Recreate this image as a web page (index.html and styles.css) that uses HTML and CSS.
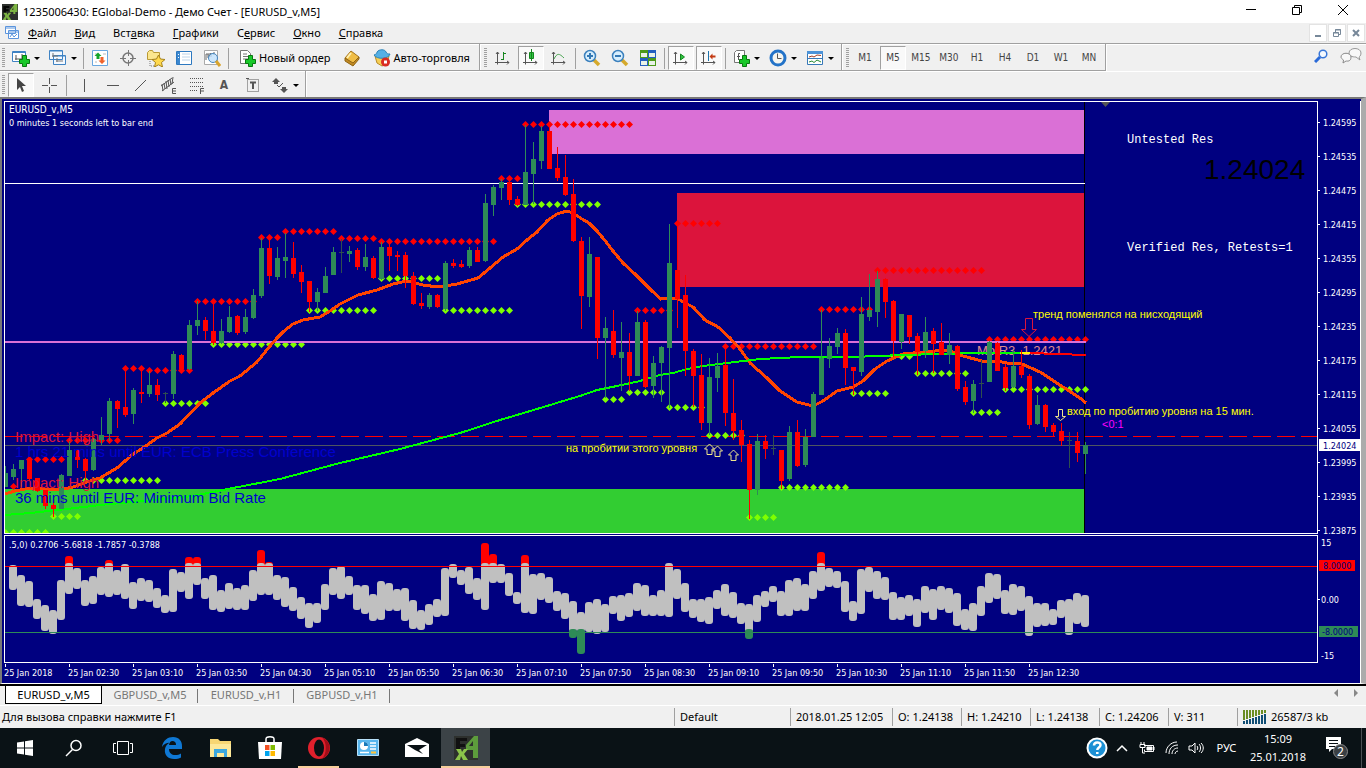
FILE: index.html
```html
<!DOCTYPE html>
<html lang="ru">
<head>
    <meta charset="UTF-8">
    <meta name="viewport" content="width=device-width, initial-scale=1.0">
    <title>1235006430: EGlobal-Demo - Демо Счет - [EURUSD_v,M5]</title>
    <link rel="stylesheet" href="styles.css">
</head>
<body>
    <header class="titlebar">
        <svg class="logo" width="16" height="16" viewBox="0 0 24 24"><rect width="24" height="24" fill="#2d302d"/><path d="M2 3h9v3H6v2h4v3H6v3H2z" fill="#050505"/><path d="M19 0h4v12h-3v3h-3v-3h-5V9zM17 5l-2 4h2z" fill="#7cb342"/><path d="M2 13h5l1 3 2-3h4l-4 5 4 6H9l-2-4-1 4H1l4-6z" fill="#7cb342"/></svg>
        <h1>1235006430: EGlobal-Demo - Демо Счет - [EURUSD_v,M5]</h1>
        <button class="win" aria-label="Свернуть"><svg width="12" height="12"><path d="M1 5.5h10" stroke="#000"/></svg></button>
        <button class="win" aria-label="Восстановить"><svg width="12" height="12"><path d="M1.500 3.500h7v7h-7zM3.500 3.500v-2h7v7h-2" stroke="#000" fill="none"/></svg></button>
        <button class="win" aria-label="Закрыть"><svg width="12" height="12"><path d="M1 1l10 10M11 1L1 11" stroke="#000"/></svg></button>
    </header>

    <nav class="menubar">
        <svg class="doc" width="14" height="14"><path d="M.5.5h10v7h-10zM3.500 4.500h10v8h-10z" fill="#fff" stroke="#5b94dc"/><path d="M.5 2h10M4 6h10" stroke="#5b94dc"/><path d="M5 11l2-3 2 3 3-3" stroke="#5b94dc" fill="none"/></svg>
        <button><u>Ф</u>айл</button>
        <button><u>В</u>ид</button>
        <button>Вст<u>а</u>вка</button>
        <button><u>Г</u>рафики</button>
        <button>С<u>е</u>рвис</button>
        <button><u>О</u>кно</button>
        <button><u>С</u>правка</button>
        <span class="grow"></span>
        <button class="mdi" aria-label="Свернуть окно"><svg width="10" height="10"><path d="M2 8h6" stroke="#778899" stroke-width="2"/></svg></button>
        <button class="mdi" aria-label="Восстановить окно"><svg width="10" height="10"><path d="M1.500 4.500h5v4h-5zM3.500 4V1.500h5v5H7M3 2h6M1 5h6" stroke="#778899" fill="none"/></svg></button>
        <button class="mdi" aria-label="Закрыть окно"><svg width="10" height="10"><path d="M2 2l6 6M8 2L2 8" stroke="#778899" stroke-width="2"/></svg></button>
    </nav>

    <div class="toolbar">
        <div class="group">
            <i class="grip"></i>
            <button class="drop" aria-label="Новый график"><svg width="18" height="18"><path d="M.5 2.500h13v10h-13z" fill="#fff" stroke="#3f83c4"/><path d="M1 3h12" stroke="#3f83c4" stroke-width="2"/><path d="M3 10h8M4 6v5M10 5v6" stroke="#555"/><path d="M10.500 6.500h4v4h3v4h-3v3h-4v-3h-3v-4h3z" fill="#18c829" stroke="#08760f"/></svg></button>
            <button class="drop" aria-label="Профили"><svg width="18" height="18"><path d="M.5 1.500h13v9h-13zM4.500 6.500h12v9h-12z" fill="#f4f9ff" stroke="#3f83c4"/><path d="M1 2h12M5 7h11" stroke="#3f83c4"/><path d="M3 7h6M4 4v4M7 12h7M8 9v4" stroke="#777" fill="none"/></svg></button>
            <i class="sep"></i>
            <button aria-label="Обзор рынка"><svg width="18" height="18"><path d="M1.500 1.500h15v15h-15z" fill="#fff" stroke="#69a7e0"/><path d="M4 5h2M12 5h3M4 13h2" stroke="#bbb"/><path d="M7 3.500l3.500 3.500H8.500v3h-3V7h-2z" fill="#13a52a"/><path d="M11 15l3.500-3.500H12.500V8h-3v3.500h-2z" fill="#f0632b"/></svg></button>
            <button aria-label="Окно данных"><svg width="18" height="18" fill="none" stroke="#777"><circle cx="9" cy="9" r="5" stroke-width="1.500"/><path d="M9.500 1v6M9.500 11v6M1 9.500h6M11 9.500h6"/></svg></button>
            <button aria-label="Навигатор"><svg width="20" height="18"><path d="M1.500 3.500l2-2h3l1 2h6v7h-12z" fill="#fbe68e" stroke="#b99a35"/><path d="M4 12v5h4" stroke="#777" stroke-dasharray="1 1" fill="none"/><path d="M12.500 6l2 4 4.500.5-3.500 3 1 4.500-4-2.200-4 2.200 1-4.500-3.500-3 4.500-.5z" fill="#ffd94d" stroke="#a5811b"/></svg></button>
            <button aria-label="Терминал"><svg width="18" height="18"><path d="M1.500 2.500h15v13h-15z" fill="#fff" stroke="#2c78c0"/><path d="M2 3h3v12H2z" fill="#3b87cf"/><path d="M7 5h8M7 8h8M7 11h8" stroke="#bcd4ea"/><path d="M3 5.500h1M3 8.500h1" stroke="#fff"/></svg></button>
            <button aria-label="Тестер"><svg width="18" height="18"><path d="M1.500 1.500h13v14h-13z" fill="#fff" stroke="#aaa"/><path d="M3 11V5h2v4M6 4v4l2-4v4M11 3v3" stroke="#666" fill="none"/><circle cx="10" cy="9" r="4.500" fill="#bfe0fbcc" stroke="#4787c0"/><path d="M13 12l4 5" stroke="#d8a32c" stroke-width="3"/></svg></button>
            <i class="sep"></i>
            <button class="wide"><svg width="18" height="18"><path d="M2.500 1.500h7l3 3v10h-10z" fill="#fff" stroke="#777"/><path d="M5 5h4M5 7.500h6M5 10h5" stroke="#777"/><path d="M10.500 6.500h4v4h3v4h-3v3h-4v-3h-3v-4h3z" fill="#18c829" stroke="#08760f"/></svg>Новый ордер</button>
            <button aria-label="MetaEditor"><svg width="18" height="18"><path d="M2 9l6-7 8 6-6 8z" fill="#f0bd45" stroke="#a4731a"/><path d="M2 9v3l8 5 6-7V8l-6 6z" fill="#c18a24" stroke="#8f6414"/><path d="M4 9l4-5" stroke="#fff0b0" stroke-width="2"/></svg></button>
            <button class="wide"><svg width="18" height="18"><path d="M2 7h14l-2 8-5 2-5-3z" fill="#f6cf56" stroke="#b88b28"/><path d="M1 6c2-1 3-1 3-3 2-3 8-3 9 0 1 2 2 2 4 2-1 5-13 6-16 1z" fill="#55b0e5" stroke="#2c83b8"/><circle cx="12.500" cy="13" r="4.500" fill="#d92c22"/><rect x="11" y="11.500" width="3" height="3" fill="#fff"/></svg>Авто-торговля</button>
        </div>
        <div class="group">
            <i class="grip"></i>
            <button aria-label="Бары"><svg width="18" height="18" fill="none" stroke="#555"><path d="M3.500 3v12.500M1 13.500h14M2 5l1.500-2L5 5M13 12l2 1.500-2 2"/><path d="M9.500 11V3M7 10.500h2.500M9.500 4.500H12" stroke="#15861f"/></svg></button>
            <button class="pressed" aria-label="Свечи"><svg width="18" height="18" fill="none" stroke="#555"><path d="M3.500 3v12.500M1 13.500h14M2 5l1.500-2L5 5M13 12l2 1.500-2 2"/><path d="M9.500 0v12M7.500 3.500h4v6h-4z" stroke="#15861f" fill="#2fc440"/></svg></button>
            <button aria-label="Линия"><svg width="18" height="18" fill="none" stroke="#555"><path d="M3.500 3v12.500M1 13.500h14M2 5l1.500-2L5 5M13 12l2 1.500-2 2"/><path d="M4 10c3-6 5-6 10-1" stroke="#4aa552"/></svg></button>
            <i class="sep"></i>
            <button aria-label="Увеличить"><svg width="18" height="18"><path d="M11 11l5 5" stroke="#d5a92c" stroke-width="3.500"/><circle cx="7" cy="7" r="5.500" fill="#d7eefd" stroke="#3b80bd" stroke-width="1.500"/><path d="M4 7h6M7 4v6" stroke="#3479b5" stroke-width="2"/></svg></button>
            <button aria-label="Уменьшить"><svg width="18" height="18"><path d="M11 11l5 5" stroke="#d5a92c" stroke-width="3.500"/><circle cx="7" cy="7" r="5.500" fill="#d7eefd" stroke="#3b80bd" stroke-width="1.500"/><path d="M4 7h6" stroke="#3479b5" stroke-width="2"/></svg></button>
            <button aria-label="Расположить окна"><svg width="18" height="18"><path d="M1 1h8v8H1zM9 9h8v8H9z" fill="#4b9a19"/><path d="M9 1h8v8H9zM1 9h8v8H1z" fill="#235fc0"/><path d="M2 4h6v4H2zM10 4h6v4h-6zM2 12h6v4H2zM10 12h6v4h-6z" fill="#e8f2e8"/></svg></button>
            <i class="sep"></i>
            <button class="pressed" aria-label="Автопрокрутка"><svg width="18" height="18" fill="none" stroke="#555"><path d="M3.500 3v12.500M1 13.500h14M2 5l1.500-2L5 5M13 12l2 1.500-2 2"/><path d="M8.500 5v6l4-3z" stroke="#15861f" fill="#2fc440"/></svg></button>
            <button class="pressed" aria-label="Сдвиг графика"><svg width="18" height="18" fill="none" stroke="#555"><path d="M3.500 3v12.500M1 13.500h14M2 5l1.500-2L5 5M13 12l2 1.500-2 2"/><path d="M8.500 2v10" stroke="#1d74ad"/><path d="M9.500 7.500l3-3v2h3v2h-3v2z" fill="#c33a12" stroke="none"/></svg></button>
            <i class="sep"></i>
            <button class="drop" aria-label="Индикаторы"><svg width="18" height="18"><path d="M4.500 1.500h8v12h-10v-10z" fill="#fff" stroke="#777"/><path d="M8 4.500H6.500V11M5 7.500h3" stroke="#555" fill="none"/><path d="M10.500 6.500h4v4h3v4h-3v3h-4v-3h-3v-4h3z" fill="#18c829" stroke="#08760f"/></svg></button>
            <button class="drop" aria-label="Периоды"><svg width="18" height="18"><circle cx="9" cy="9" r="7" fill="#f5f5f0" stroke="#2373c8" stroke-width="3"/><path d="M8.500 4.500v5h4" stroke="#555" fill="none"/></svg></button>
            <button class="drop" aria-label="Шаблоны"><svg width="18" height="18"><path d="M1.500 2.500h15v13h-15z" fill="#fff" stroke="#3778b8"/><path d="M1 3.500h16" stroke="#4c93d8" stroke-width="3"/><path d="M2 9.500h14" stroke="#3778b8"/><path d="M3 8l3-1 2 1 3-2 4 .5" stroke="#a23c22" fill="none"/><path d="M3 13l3-1 2 1.500 3-2.500 4 2" stroke="#278b35" fill="none"/></svg></button>
        </div>
        <div class="group periods">
            <i class="grip"></i>
            <button>M1</button>
            <button class="pressed">M5</button>
            <button>M15</button>
            <button>M30</button>
            <button>H1</button>
            <button>H4</button>
            <button>D1</button>
            <button>W1</button>
            <button>MN</button>
        </div>
        <span class="grow"></span>
        <button class="side" aria-label="Поиск"><svg width="14" height="14"><path d="M6 8l-5 5" stroke="#2a6ad8" stroke-width="3"/><circle cx="9" cy="5" r="3.800" fill="#f4f9ff" stroke="#3876d8" stroke-width="1.500"/></svg></button>
        <button class="side" aria-label="Чат"><svg width="22" height="16"><path d="M9 5c0-6 12-6 12 0 0 3-2 4-2 4l1 3-4-3c-4 0-7-1-7-4z" fill="#f8f8f8" stroke="#999"/><path d="M1 9c0-5 10-5 10 0s-4 4-5 4l-3 2 .500-3C2 11 1 10 1 9z" fill="#f8f8f8" stroke="#888"/></svg></button>
    </div>

    <div class="toolbar drawing">
        <div class="group">
            <i class="grip"></i>
            <button class="pressed" aria-label="Курсор"><svg width="18" height="18"><path d="M5 2v12l3-3 2 5 2-1-2-5h4z" fill="#444"/></svg></button>
            <button aria-label="Перекрестие"><svg width="18" height="18" stroke="#555"><path d="M9.500 2v6M9.500 11v6M2 9.500h6M11 9.500h6"/></svg></button>
            <i class="sep"></i>
            <button aria-label="Вертикальная линия"><svg width="18" height="18" stroke="#555"><path d="M9.500 3v13"/></svg></button>
            <button aria-label="Горизонтальная линия"><svg width="18" height="18" stroke="#555"><path d="M4 9.500h12"/></svg></button>
            <button aria-label="Трендовая линия"><svg width="18" height="18" stroke="#555"><path d="M4 15L15 4"/></svg></button>
            <button aria-label="Канал"><svg width="18" height="18" stroke="#555" fill="none"><path d="M2 10L13 2M3 15L15 6M3 8l1 7M7 5l1 8M11 3l1 6M5 7l1 6M9 4l1 7M14 1l-1 7"/><path d="M17 12.500h-3.500v5H17M14 15h3"/></svg></button>
            <button aria-label="Фибоначчи"><svg width="18" height="18" stroke="#555" fill="none"><path d="M3 2.500h13M3 6.500h13M3 10.500h13M3 14.500h8" stroke-dasharray="1 1"/><path d="M17 12.500h-3.500V18M14 15h3"/></svg></button>
            <button class="glyph">A</button>
            <button aria-label="Метка"><svg width="18" height="18" stroke="#555" fill="none"><path d="M4.500 3.500h11v12h-11z" stroke-dasharray="1 1"/><path d="M7 6.500h6M10 7v6" stroke-width="2"/><path d="M3 2.500h3"/></svg></button>
            <button class="drop" aria-label="Стрелки"><svg width="18" height="18" fill="#555"><path d="M1 6l4-4 4 4H7v2H3V6zM9 13h2v-2h4v2h2l-4 4z"/><path d="M6 9l2 2 4-4" fill="none" stroke="#555"/></svg></button>
        </div>
    </div>

    <main class="chart">
        <svg class="panel" id="price"></svg>
        <svg class="panel" id="osc"></svg>
        <svg class="times" id="times"></svg>
        <svg class="scale" id="scale"></svg>
    </main>

    <nav class="tabs">
        <button class="active">EURUSD_v,M5</button>
        <button>GBPUSD_v,M5</button>
        <button>EURUSD_v,H1</button>
        <button>GBPUSD_v,H1</button>
        <span class="grow"></span>
        <button class="scroll" aria-label="Назад"><svg width="6" height="8"><path d="M5 0v8L1 4z" fill="#888"/></svg></button>
        <button class="scroll" aria-label="Вперед"><svg width="6" height="8"><path d="M1 0v8l4-4z" fill="#888"/></svg></button>
    </nav>

    <footer class="status">
        <span class="hint">Для вызова справки нажмите F1</span>
        <span class="profile">Default</span>
        <span class="date">2018.01.25 12:05</span>
        <span>O: 1.24138</span>
        <span>H: 1.24210</span>
        <span>L: 1.24138</span>
        <span>C: 1.24206</span>
        <span>V: 311</span>
        <span class="traffic"><svg width="24" height="14"><path d="M1 0v10M4 0v9M7 0v8M10 0v7M13 0v6M16 0v5M19 0v4M22 0v3" stroke="#6b8e23" stroke-width="2"/><path d="M1 11v3M4 10v4M7 9v5M10 8v6M13 7v7M16 6v8M19 5v9M22 4v10" stroke="#104e75" stroke-width="2"/></svg>26587/3 kb</span>
    </footer>

    <div class="taskbar">
        <button aria-label="Пуск"><svg width="16" height="16" fill="#fff"><path d="M0 2.500l7-1v6H0zM8 1.300L16 0v7.500H8zM0 8.500h7v6l-7-1zM8 8.500h8V16l-8-1.300z"/></svg></button>
        <button aria-label="Поиск Windows"><svg width="18" height="18" fill="none" stroke="#fff" stroke-width="1.500"><circle cx="11" cy="6.500" r="5"/><path d="M7.500 10.500L1 17"/></svg></button>
        <button aria-label="Представление задач"><svg width="20" height="16" fill="none" stroke="#fff"><path d="M4.500 1.500h11v13h-11zM3 3.500H.5v9H3M17 3.500h2.500v9H17"/></svg></button>
        <button aria-label="Edge"><svg width="22" height="22" fill="#0f78d4"><path d="M1 10C2 3 7 0 12 0c6 0 9 4 9 9v3H8c0 4 3 6 6 6 3 0 4-.5 6-1.500v4c-2 1-4 1.500-7 1.500-6 0-10-4-9-10 .5-3 2-5 5-6.500C5 6 3 7 1 10zm7-2h7c0-3-1.500-4-3.500-4S8.500 5.500 8 8z"/></svg></button>
        <button aria-label="Проводник"><svg width="22" height="20"><path d="M0 1h8l2 2h11v16H0z" fill="#f7d673"/><path d="M0 6h21v13H0z" fill="#fde899"/><path d="M4 11h13v8h-3v-4H7v4H4z" fill="#3ba7df"/></svg></button>
        <button aria-label="Магазин"><svg width="24" height="24"><path d="M8 6V3c0-3 8-3 8 0v3" fill="none" stroke="#fff" stroke-width="1.500"/><path d="M0 6h24l-1 17H1z" fill="#fff"/><path d="M7 9h4.500v5H7z" fill="#f25022"/><path d="M12.500 9H17v5h-4.500z" fill="#7fba00"/><path d="M7 15h4.500v5H7z" fill="#00a4ef"/><path d="M12.500 15H17v5h-4.500z" fill="#ffb900"/></svg></button>
        <button class="running" aria-label="Opera"><svg width="24" height="24"><ellipse cx="12" cy="12" rx="11" ry="11" fill="#e0202c"/><path d="M15 1.500a11 11 0 0 1 0 21c5-4 5-17 0-21z" fill="#a30d18"/><ellipse cx="12" cy="12" rx="5" ry="8.500" fill="#091014"/></svg></button>
        <button aria-label="Панель управления"><svg width="22" height="18"><path d="M.5.5h21v16H.5z" fill="#58b5ec" stroke="#b8e1fa"/><circle cx="7" cy="7" r="4" fill="#fff"/><path d="M7 7V3a4 4 0 0 1 4 4z" fill="#1979b9"/><path d="M13 4h6M13 7h6M13 10h6M3 13.500h9" stroke="#fff" stroke-width="1.500"/><path d="M14 13.500h5" stroke="#ffc43a" stroke-width="2"/></svg></button>
        <button aria-label="Почта"><svg width="24" height="20"><path d="M0 6l12-6 12 6v13H0z" fill="#fff"/><path d="M2 7h20l-8 5 4 4-8-4z" fill="#091014"/></svg></button>
        <button class="current" aria-label="EGlobal MT4"><svg width="24" height="24"><rect width="24" height="24" fill="#2d302d"/><path d="M2 2h11v3H6v3h5v3H6v2H2z" fill="#111"/><path d="M20 0h4v22h-5v-8h-7V9zM19 5l-4 5h4z" fill="#5d9c3c"/><path d="M2 13h5l1 3 2-3h4l-4 5 4 6H9l-2-4-1 4H1l4-6z" fill="#8bc34a"/></svg></button>
        <span class="grow"></span>
        <button class="tray" aria-label="Справка"><svg width="22" height="22"><circle cx="11" cy="11" r="9.500" fill="#1c90d4" stroke="#fff" stroke-width="2"/><path d="M8 8.500c0-4 6.500-4 6.500-.5 0 2.500-3.200 2.500-3.200 5M11.300 15v2" fill="none" stroke="#fff" stroke-width="2.500"/></svg></button>
        <button class="tray" aria-label="Скрытые значки"><svg width="12" height="8" fill="none" stroke="#fff" stroke-width="1.500"><path d="M1 7l5-5 5 5"/></svg></button>
        <button class="tray" aria-label="Батарея"><svg width="16" height="14" fill="none" stroke="#fff"><path d="M5 4.500h9.500v6h-9v-2M15 6v3M1 3.500h5v3H1zM2 1v2M5 1v2M3.500 7v5H6"/><path d="M8 6h5v3H8z" fill="#fff"/></svg></button>
        <button class="tray" aria-label="Сеть"><svg width="14" height="14" fill="none" stroke="#fff"><path d="M1 12C1 6 6 1 12 1M4 13c0-5 3-9 9-9M7 13c0-3 2-6 6-6M10 13c0-1 1-3 3-3" /></svg></button>
        <button class="tray" aria-label="Громкость"><svg width="18" height="14" fill="none" stroke="#fff"><path d="M1 5h3l3-3v10L4 9H1zM9 5c1 1 1 3 0 4M11 3c2 2 2 6 0 8M13 2c3 3 3 7 0 10"/></svg></button>
        <button class="lang">РУС</button>
        <div class="clock"><time>15:09</time><time>25.01.2018</time></div>
        <button class="notes" aria-label="Уведомления"><svg width="24" height="24"><path d="M1 1h15v12h-9l-3 3v-3H1z" fill="#fff"/><path d="M4 4.500h9M4 7.500h9M4 10.500h6" stroke="#091014"/><circle cx="15.500" cy="15.500" r="7" fill="#3a3f43" stroke="#888"/><text x="12" y="20" class="badge">2</text></svg></button>
        <i class="desktop"></i>
    </div>
    <script src="chart.js"></script>
</body>
</html>
```
FILE: styles.css
```css
* {
    margin: 0;
    padding: 0;
    box-sizing: border-box;
}

body {
    display: flex;
    flex-direction: column;
    min-height: 100vh;
    background: #f0f0f0;
    color: #000;
    font: 12px/16px "Noto Sans", "Open Sans", sans-serif;
    overflow: hidden;
}

button {
    display: flex;
    align-items: center;
    justify-content: center;
    border: none;
    background: none;
    color: inherit;
    font: inherit;
    white-space: nowrap;
}

svg {
    display: block;
    flex: none;
}

.grow {
    flex: 1;
}

/* title and menu */
.titlebar {
    display: flex;
    align-items: center;
    height: 23px;
    padding-left: 2px;
    background: #fff;
}

.titlebar h1 {
    flex: 1;
    margin-left: 5px;
    font-size: 11px;
    font-weight: normal;
}

.win {
    width: 46px;
    height: 20px;
    margin-bottom: 3px;
}

.menubar {
    display: flex;
    align-items: center;
    height: 20px;
    font-size: 11px;
}

.menubar .doc {
    margin: 0 0 0 5px;
}

.menubar button {
    padding: 0 9px;
}

.menubar .mdi {
    width: 18px;
    height: 18px;
    margin-right: 1px;
    padding: 0;
    background: #fff;
    border: 1px solid #e3e3e3;
}

/* toolbars */
.toolbar {
    display: flex;
    height: 28px;
    border-top: 1px solid #a0a0a0;
    box-shadow: inset 0 1px #fff, inset 0 -1px #a0a0a0;
}

.toolbar.drawing {
    height: 26px;
    border-top: none;
    box-shadow: inset 0 1px #fff;
}

.toolbar:not(.drawing) {
    box-shadow: inset 0 1px #fff;
}

.group {
    display: flex;
    align-items: center;
    padding: 2px 2px 0;
    border-right: 1px solid #a0a0a0;
    border-bottom: 1px solid #a0a0a0;
    box-shadow: 1px 0 #fff;
}

.group + .group {
    padding-left: 4px;
}

.drawing .group {
    border-bottom: none;
}

.grip {
    width: 3px;
    height: 20px;
    margin-right: 2px;
    background: repeating-linear-gradient(#a0a0a0 0 1px, #f0f0f0 1px 2px);
}

.sep {
    width: 1px;
    height: 21px;
    margin: 0 2px;
    background: #a0a0a0;
}

.drawing .sep {
    margin: 0 3px;
}

.toolbar button {
    width: 28px;
    height: 24px;
}

.toolbar .drop {
    width: 37px;
    gap: 4px;
}

.drop::after {
    content: "";
    border: 3px solid transparent;
    border-top-color: #000;
    border-bottom: none;
}

.toolbar .wide {
    width: auto;
    padding: 0 7px;
    gap: 3px;
    font-size: 11px;
}

.toolbar .pressed {
    width: 26px;
    margin: 0 1px;
    background: #f9f9f9;
    border: 1px solid #fff;
    border-top-color: #a0a0a0;
    border-left-color: #a0a0a0;
}

.periods {
    color: #444;
    font: 10px/14px "DejaVu Sans Condensed", sans-serif;
}

.toolbar .glyph {
    color: #555;
    font: bold 12px/14px "DejaVu Sans Condensed", sans-serif;
}

.toolbar .side {
    width: 30px;
}

/* chart window */
.chart {
    display: grid;
    grid-template-columns: 1fr 43px;
    grid-template-rows: 433px 128px auto;
    row-gap: 1px;
    flex: 1;
    padding: 2px 0 0 2px;
    background: #000080;
    border-style: solid;
    border-width: 2px 5px 1px 2px;
    border-color: #787878 #ababab #fff #787878;
    font: 9px/12px "DejaVu Sans Condensed", sans-serif;
    fill: #fff;
}

.panel {
    width: 100%;
    height: 100%;
    border: 1px solid #fff;
    overflow: hidden;
}

.times {
    width: 100%;
    height: 19px;
}

.scale {
    grid-column: 2;
    grid-row: 1 / 4;
    width: 43px;
    height: 100%;
    border-right: 1px solid #fff;
}

.note {
    fill: #ffff00;
    font: 11px "Liberation Sans", sans-serif;
}

.chart .symbol {
    font-size: 10px;
}

.news {
    font: 15px "Liberation Sans", sans-serif;
}

.pivot {
    fill: #e08c8c;
    font: 13px "Liberation Sans", sans-serif;
}

.quote {
    fill: #000;
    font: 28px "Liberation Sans", sans-serif;
}

.zone {
    font: 12px "Liberation Mono", monospace;
}

.risk {
    fill: #ff00ff;
    font: 11px "Liberation Sans", sans-serif;
}

/* tabs and status */
.tabs {
    display: flex;
    align-items: flex-start;
    height: 21px;
    padding-left: 5px;
    border-top: 2px solid #000;
    color: #777;
    font-size: 11px;
}

.tabs button {
    position: relative;
    width: 96px;
    height: 18px;
}

.tabs button:not(.active):not(.scroll)::after {
    content: "";
    position: absolute;
    right: 0;
    top: 3px;
    height: 14px;
    border-right: 1px solid #777;
}

.tabs .active {
    width: 97px;
    background: #fff;
    border: 1px solid #000;
    border-top: none;
    color: #000;
}

.tabs .scroll {
    width: 20px;
    height: 14px;
}

.status {
    display: flex;
    align-items: center;
    height: 23px;
    border-top: 1px solid #fff;
    font-size: 11px;
    line-height: 18px;
}

.status span {
    flex: none;
    width: 69px;
    height: 18px;
    padding-left: 5px;
    border-left: 1px solid #a0a0a0;
    white-space: nowrap;
}

.status .hint {
    flex: 1;
    padding-left: 2px;
    border-left: none;
}

.status .profile {
    width: 116px;
}

.status .date {
    width: 102px;
}

.status .traffic {
    display: flex;
    align-items: center;
    gap: 4px;
    width: 129px;
}

/* taskbar */
.taskbar {
    display: flex;
    align-items: center;
    height: 40px;
    background: #0a1216;
    color: #fff;
    font-size: 11px;
}

.taskbar button {
    width: 49px;
    height: 40px;
    border-bottom: 2px solid transparent;
    border-top: 2px solid transparent;
}

.taskbar .running {
    width: 41px;
    margin: 0 4px;
    border-bottom-color: #f7cf9c;
}

.taskbar .current {
    background: #3c4347;
    border-bottom-color: #f7cf9c;
}

.taskbar .tray {
    width: 25px;
}

.taskbar .lang {
    width: 35px;
}

.clock {
    display: flex;
    flex-direction: column;
    align-items: center;
    width: 68px;
    line-height: 18px;
}

.badge {
    fill: #fff;
    font: 12px "Noto Sans", sans-serif;
}

.desktop {
    height: 40px;
    width: 5px;
    border-left: 1px solid #4a5054;
}
```
FILE: chart.js
```js
// drawing coordinates: one bar every 8px, y grows down from the top of the window
const UP = "#2e8b57", DOWN = "#ff0000", FLAT = "#2f4f4f";
const barX = k => 5 + 8 * k;

// type, high, body top, body bottom, low
const candles = `
u466,473,487,487 u464,469,477,480 u460,460,469,487 d458,460,479,480 d478,478,491,492 d490,490,506,509 d501,505,509,517 u474,475,509,509
u441,450,476,476 d450,450,460,468 d458,459,471,481 u438,439,470,471 u417,435,440,445 u398,401,434,441 d400,401,409,428 d369,407,415,417
u388,390,414,424 d369,392,394,403 u371,385,394,397 d379,385,395,401 f392,393,394,403 u351,354,394,399 d354,355,369,370 u320,325,369,370
u301,320,326,335 d317,320,331,340 d303,331,343,345 u319,331,343,344 u306,317,332,333 d315,316,333,335 u309,317,332,334 u289,295,318,319
u238,248,296,298 d240,248,276,284 u247,258,277,280 u233,257,261,278 d242,258,274,278 d265,272,282,293 d281,281,302,312 u288,292,302,311
u267,276,293,293 u247,252,275,275 f239,252,253,273 u246,251,254,262 d248,250,267,270 u244,257,267,271 d256,258,278,279 u242,247,279,280
d244,247,256,271 d251,255,257,271 d252,255,276,288 d272,276,304,305 d293,303,306,309 u293,295,307,309 d294,295,307,308 u261,263,309,311
d259,263,266,268 d260,264,267,268 u247,250,266,268 d247,250,262,262 u194,203,261,262 u185,187,205,216 u179,182,188,200 d179,182,200,205
d196,199,205,206 u125,172,205,205 u142,159,174,204 u126,131,161,169 d124,131,169,169 d147,168,178,181 d155,177,195,196 d179,194,241,242
d237,241,296,329 u237,254,297,307 d257,257,338,359 u317,328,338,398 d310,331,355,358 u322,352,358,391 d333,352,376,391 u311,322,376,376
d320,322,387,388 u356,363,386,398 u346,347,363,402 u224,263,348,408 d223,270,299,328 d275,295,351,376 d349,351,376,407 d354,375,423,430
u358,377,423,435 u353,366,378,392 d347,365,413,426 d379,413,431,440 d420,430,445,462 d440,444,490,519 u434,441,490,495 d435,441,449,459
f435,448,449,455 d450,450,481,489 u426,432,479,481 d420,432,466,467 u429,437,465,467 u392,394,437,437 u310,358,395,395 u338,346,359,368
u328,333,347,354 d329,333,368,385 d367,367,371,395 u297,314,372,376 u274,310,317,321 u271,279,312,327 d278,279,302,318 d300,301,341,357
u314,314,342,349 d315,315,337,344 d333,336,352,375 u317,332,351,358 d328,331,344,373 d323,342,355,355 u333,345,355,364 d345,346,389,391
d381,387,402,405 u380,384,401,413 f360,383,384,398 u341,342,382,382 d342,343,371,371 d364,367,388,391 u350,366,387,388 d350,366,375,378
d374,376,425,429 u395,405,424,425 d404,405,427,432 d423,425,432,436 d423,431,441,446 f432,440,441,468 d432,441,453,462 u442,445,454,474`
    .trim().split(/\s+/);

// first x, last x, y
const upperDots = [[13,13,486],[29,61,459],[69,117,440],[125,141,368],[149,189,370],[197,253,301],[261,277,237],
    [285,333,231],[341,373,238],[381,493,241],[501,517,178],[525,629,124],[677,717,223],[637,669,310],[725,813,346],
    [821,869,309],[877,981,270],[989,1085,339]];
const lowerDots = [[5,45,532],[53,77,516],[85,157,480],[165,205,403],[213,301,344],[309,373,310],[381,437,278],
    [445,509,310],[517,597,204],[605,621,399],[629,661,392],[669,701,407],[709,741,435],[749,773,517],[781,845,487],
    [853,885,393],[893,909,356],[917,965,373],[973,997,412],[1005,1085,389]];

const fastMa = "5,494 15,491 30,488 60,490 73,487 90,481 100,478 117,468 133,454 143,448 157,438 167,433 180,424 200,403 213,393 230,381 240,376 257,362 270,346 277,338 283,332 293,324 303,320 320,317 330,311 340,304 358,295 377,290 393,284 407,281 423,285 438,287 457,284 478,278 490,268 503,257 517,249 527,240 537,232 548,220 557,214 567,211 573,213 582,219 589,223 597,231 607,243 613,251 623,263 635,274 652,291 661,299 677,298 683,302 693,307 705,320 718,327 730,338 740,349 750,363 767,378 780,391 797,402 813,406 823,401 837,391 853,387 863,381 875,369 887,361 903,354 923,352 947,350 963,356 982,361 997,361 1007,363 1022,364 1040,372 1063,387 1080,398 1086,403";
const slowMa = "5,515 30,513 67,509 100,505 143,501 193,496 233,488 280,479 340,463 400,449 460,433 500,420 537,409 560,402 580,396 597,390 617,386 640,381 660,375 673,373 687,369 703,366 727,363 760,359 800,357 853,357 903,355 940,354 980,353 1020,353";

// top and bottom of every oscillator bar, from the second candle on
const waves = `565,590 575,606 581,607 599,619 605,631 610,634 580,620 563,594 568,589 580,606 576,604 567,595 563,597 570,595 564,599 582,609 578,601
580,602 588,608 595,613 569,612 572,592 563,599 563,585 578,599 575,610 590,612 583,609 588,610 585,610 570,601 563,595 563,595 575,600 577,607
587,611 597,619 603,628 603,623 584,610 568,595 566,599 576,595 585,610 585,614 594,621 581,620 583,611 589,611 588,621 600,629 610,630 604,625
599,617 568,616 564,578 570,585 567,594 578,600 563,610 563,583 564,583 573,596 592,604 563,613 574,614 573,600 577,603 591,611 593,619 601,632
612,632 602,632 599,634 604,632 596,614 595,621 593,617 583,611 585,616 595,616 590,616 563,617 569,599 583,612 599,618 599,622 597,624 590,609
584,616 592,618 603,624 604,632 595,622 591,607 586,602 591,616 580,616 578,611 584,611 571,599 563,591 568,587 571,588 581,612 601,621 569,614
567,592 571,599 577,600 592,620 597,620 595,616 599,627 586,613 589,620 586,610 588,613 593,626 609,630 603,631 586,616 573,603 574,599 590,614
584,615 586,611 596,636 603,627 603,626 609,625 600,618 599,635 593,624 595,627`.trim().split(/\s+/);
const overbought = {8: 556, 13: 560, 23: 557, 24: 557, 32: 550, 33: 562, 60: 543, 61: 554, 65: 555, 102: 552};
const oversold = {71: 638, 72: 654, 93: 639};

const rect = (x, y, w, h, fill) => `<rect x="${x}" y="${y}" width="${w}" height="${h}" fill="${fill}"/>`;
const label = (x, y, text, cls = "", fill = "") => `<text x="${x}" y="${y}" class="${cls}"${fill && ` fill="${fill}"`}>${text}</text>`;

function dots(rows, color) {
    let out = "";
    rows.forEach(([from, to, y]) => {
        for (let x = from; x <= to; x += 8) {
            out += `<path d="M${x - 3} ${y + 0.5}l3.500 -3.500l3.500 3.500l-3.500 3.500z" fill="${color}"/>`;
        }
    });
    return out;
}

function drawPrice() {
    let out = rect(549, 110, 536, 44, "#da70d6") + rect(677, 193, 408, 94, "#dc143c") + rect(5, 489, 1080, 44, "#32cd32");
    out += rect(1084, 102, 1, 432, "#000") + rect(5, 183, 1080, 1, "#fff") + rect(5, 445, 4000, 1, "#4f5560");
    out += '<path d="M5 436.500H4000" stroke="#ff0000" stroke-dasharray="18 6"/>';
    out += dots(upperDots, "#ff0000") + dots(lowerDots, "#7fff00");
    out += rect(5, 341, 1081, 2, "#da70d6");
    out += label(977, 355, "Mo R3&#160; 1.2421", "pivot");
    out += `<g fill="none" shape-rendering="crispEdges"><polyline points="${fastMa}" stroke="#ff4500" stroke-width="3"/>
        <polyline points="${slowMa}" stroke="#00ff00" stroke-width="2"/>
        <path d="M1020 353h10" stroke="#ffff00" stroke-width="2"/><path d="M1030 353l28 1 28 1" stroke="#ff0000" stroke-width="2"/></g>`;
    candles.forEach((c, k) => {
        const [high, top, bottom, low] = c.slice(1).split(",").map(Number);
        const color = {u: UP, d: DOWN, f: FLAT}[c[0]];
        out += rect(barX(k), high, 1, Math.max(low - high, 1), color) + rect(barX(k) - 2, top, 5, bottom - top, color);
    });
    out += label(15, 442, "Impact: High", "news", "#dc143c") + label(15, 457, "1 hrs 21 mins until EUR: ECB Press Conference", "news", "#0000cd");
    out += label(15, 488, "Impact: High", "news", "#dc143c") + label(15, 503, "36 mins until EUR: Minimum Bid Rate", "news", "#0000cd");
    out += label(9, 113, "EURUSD_v,M5", "symbol") + label(9, 126, "0 minutes 1 seconds left to bar end");
    out += label(1127, 143, "Untested Res", "zone") + label(1127, 251, "Verified Res, Retests=1", "zone");
    out += label(1204, 179, "1.24024", "quote") + label(1102, 428, "&lt;0:1", "risk");
    out += label(1033, 318, "тренд поменялся на нисходящий", "note") + label(1067, 415, "вход по пробитию уровня на 15 мин.", "note");
    out += label(566, 452, "на пробитии этого уровня", "note");
    out += '<path d="M1025.500 318.500h7v11h4l-7.500 7-7.500-7h4z" fill="none" stroke="#dc143c"/>';
    out += '<path d="M1058.500 409.500h4v7h3l-5 4-5-4h3z" fill="none" stroke="#f0e68c"/>';
    [[709, 444], [717, 446], [733, 450]].forEach(([x, y]) => {
        out += `<path d="M${x + 0.5} ${y}l5 5h-2.500v5.500h-5v-5.500h-2.500z" fill="none" stroke="#f0e68c"/>`;
    });
    out += '<path d="M1101 102h9l-4.500 5z" fill="#555"/>';
    document.getElementById("price").innerHTML = `<g transform="translate(-5 -102)">${out}</g>`;
}

function drawOscillator() {
    const pill = (k, top, bottom, fill) => `<rect x="${barX(k) - 4}" y="${top}" width="8" height="${bottom - top}" rx="3" fill="${fill}"/>`;
    let out = "";
    waves.forEach((w, i) => {
        const k = i + 1;
        const [top, bottom] = w.split(",").map(Number);
        if (overbought[k]) out += pill(k, overbought[k], 570, DOWN);
        out += pill(k, top, bottom, "#c0c0c0");
        if (oversold[k]) out += pill(k, 629, oversold[k], UP);
    });
    out += rect(5, 566, 4000, 1, "#ff0000") + rect(5, 632, 4000, 1, UP);
    out += label(9, 548, ".5,0) 0.2706 -5.6818 -1.7857 -0.3788");
    document.getElementById("osc").innerHTML = `<g transform="translate(-5 -536)">${out}</g>`;
}

function drawAxes() {
    const times = ["2018", "02:30", "03:10", "03:50", "04:30", "05:10", "05:50", "06:30", "07:10", "07:50", "08:30",
        "09:10", "09:50", "10:30", "11:10", "11:50", "12:30"];
    document.getElementById("times").innerHTML = times.map((t, i) =>
        rect(1 + 64 * i, 0, 1, 3, "#fff") + label(64 * i, 12, "25 Jan " + t)).join("");

    let out = "";
    for (let i = 0; i < 13; i++) {
        const y = 21 + 34 * i;
        out += rect(0, y, 2, 1, "#fff") + label(5, y + 4, ((124595 - 60 * i) / 100000).toFixed(5));
    }
    out += rect(1, 338, 41, 12, "#fff") + label(5, 348, "1.24024", "", "#000080");
    out += label(3, 445, "15") + rect(0, 498, 2, 1, "#fff") + label(3, 502, "0.00") + label(3, 558, "-15");
    out += rect(1, 459, 36, 11, DOWN) + label(5, 468, "8.0000", "", "#000080");
    out += rect(1, 525, 39, 11, UP) + label(4, 534, "-8.0000", "", "#000080");
    document.getElementById("scale").innerHTML = out;
}

drawPrice();
drawOscillator();
drawAxes();
```
